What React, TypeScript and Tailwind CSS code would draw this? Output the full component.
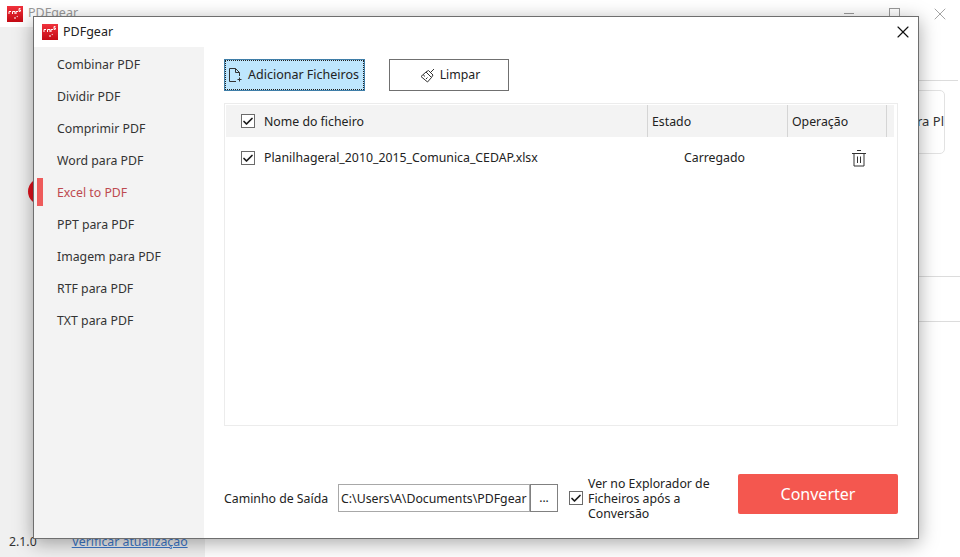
import { Check, X } from 'lucide-react';

const FONT = "font-['Noto_Sans','Liberation_Sans',sans-serif]";

const menuItems = [
  'Combinar PDF',
  'Dividir PDF',
  'Comprimir PDF',
  'Word para PDF',
  'Excel to PDF',
  'PPT para PDF',
  'Imagem para PDF',
  'RTF para PDF',
  'TXT para PDF',
];

function Logo() {
  return (
    <svg width="16" height="16" viewBox="0 0 16 16" className="shrink-0">
      <defs>
        <linearGradient id="logoRed" x1="0" y1="0" x2="0" y2="1">
          <stop offset="0" stopColor="#f0323c" />
          <stop offset="1" stopColor="#c40a14" />
        </linearGradient>
      </defs>
      <rect width="16" height="16" fill="url(#logoRed)" />
      <path d="M2 8V5.5h2M5.5 8V5.5h2.5V8M9 8V5.5h2" stroke="#fff" strokeWidth="1" fill="none" />
      <path d="M13.5 2.5h-1.5v3h1.5M12 4h1.5v1" stroke="#fff" strokeWidth="0.9" fill="none" />
      <path d="M7 12l1-1 1 1-1 1zM9.5 10.5l.7-.7.7.7-.7.7z" fill="#fff" />
    </svg>
  );
}

function CheckBox() {
  return (
    <span className="flex h-[14px] w-[14px] shrink-0 items-center justify-center border border-[#6b6b6b] bg-white">
      <Check size={13} strokeWidth={3.5} className="text-[#1a1a1a]" />
    </span>
  );
}

function BackgroundWindow() {
  return (
    <div className="absolute inset-0 flex flex-col bg-white">
      <div className="flex h-[27px] items-center bg-white pl-[7px]">
        <Logo />
        <span className="ml-[5px] text-[12.5px] text-[#9a9a9a]">PDFgear</span>
        <span className="ml-auto h-px w-[10px] bg-[#9a9a9a]" />
        <span className="ml-[35px] h-[11px] w-[11px] border border-[#9a9a9a]" />
        <X size={20} strokeWidth={1.1} className="ml-[30px] mr-[10px] text-[#9a9a9a]" />
      </div>
      <div className="flex flex-1">
        <div className="flex w-[205px] flex-col justify-end bg-[#f0f0f0] pb-[7px] pl-[9px]">
          <div className="flex items-center text-[12.3px] leading-[16px]">
            <span className="text-[#333]">2.1.0</span>
            <span className="ml-[35px] text-[#3d78c9] underline">Verificar atualização</span>
          </div>
        </div>
        <div className="flex flex-1 flex-col">
          <div className="mt-[53px] mr-[2px] h-px bg-[#dcdcdc]" />
          <div className="ml-auto mr-[15px] mt-[9px] flex h-[64px] w-[60px] items-center justify-end overflow-hidden rounded-[5px] border border-[#e2e2e2] text-[13px] text-[#333]">
            <span className="whitespace-nowrap">para Pl</span>
          </div>
          <div className="mt-[122px] h-px bg-[#dcdcdc]" />
          <div className="mt-[44px] h-px bg-[#dcdcdc]" />
        </div>
      </div>
    </div>
  );
}

function Sidebar() {
  return (
    <div className="flex w-[170px] shrink-0 flex-col bg-[#f3f3f3] pt-[1px]">
      {menuItems.map(item => {
        const active = item === 'Excel to PDF';
        return (
          <div key={item} className="relative flex h-[32px] items-center pl-[23px]">
            {active && <span className="absolute left-[3px] top-[2px] h-[28px] w-[6px] bg-[#ee5b5b]" />}
            <span className={active ? 'pt-[2px] text-[#be4a50]' : 'pt-[2px] text-[#333333]'}>{item}</span>
          </div>
        );
      })}
    </div>
  );
}

function FileTable() {
  return (
    <div className="mt-[12px] h-[323px] border border-[#ececec] pl-px pt-px">
      <div className="mr-[3px] flex h-[32px] items-center bg-[#f3f3f3]">
        <div className="flex w-[421px] items-center pl-[15px]">
          <CheckBox />
          <span className="ml-[9px] pt-[2px]">Nome do ficheiro</span>
        </div>
        <div className="flex h-full w-[140px] items-center border-l border-[#d5d5d5] pl-[4px] pt-[2px]">Estado</div>
        <div className="flex h-full w-[100px] items-center border-x border-[#d5d5d5] pl-[4px] pt-[2px]">Operação</div>
      </div>
      <div className="flex h-[42px] items-center pl-[15px]">
        <CheckBox />
        <span className="ml-[9px] w-[420px]">Planilhageral_2010_2015_Comunica_CEDAP.xlsx</span>
        <span className="w-[168px]">Carregado</span>
        <svg width="16" height="18" viewBox="0 0 16 18" fill="none" stroke="#333" strokeWidth="1" className="-ml-px">
          <path d="M6 1.5h4M1 4.5h14M3 4.5v12.5h10V4.5M6.5 7.5v6.5M9.5 7.5v6.5" />
        </svg>
      </div>
    </div>
  );
}

function Footer() {
  return (
    <div className="mt-[48px] flex items-center">
      <span className="w-[114px] pt-[2px]">Caminho de Saída</span>
      <div className="flex h-[28px] w-[192px] items-center border border-[#a8a8a8] pl-[2px] pt-[2px] whitespace-nowrap">
        C:\Users\A\Documents\PDFgear
      </div>
      <div className="flex h-[28px] w-[28px] items-center justify-center border border-[#808080] text-[12px]">...</div>
      <div className="ml-[11px] flex w-[150px] items-center">
        <CheckBox />
        <span className="ml-[5px] leading-[15px]">Ver no Explorador de Ficheiros após a Conversão</span>
      </div>
      <button className="mb-[8px] ml-[19px] h-[40px] w-[160px] rounded-[2px] bg-[#f4574f] text-[16px] text-white">Converter</button>
    </div>
  );
}

export default function App() {
  return (
    <div className={`relative h-[557px] w-[960px] overflow-hidden ${FONT}`}>
      <BackgroundWindow />
      <span className="absolute left-[28px] top-[178px] h-[27px] w-[14px] rounded-l-full bg-[#e0101c]" />
      <div className="absolute left-[33px] top-[16px] flex h-[523px] w-[886px] flex-col border border-[#6e6e6e] bg-white text-[12.3px] text-[#222] shadow-[0_4px_18px_rgba(0,0,0,0.35)]">
        <div className="flex h-[30px] shrink-0 items-center pl-[8px] pr-[5px]">
          <Logo />
          <span className="ml-[5px] text-[12.5px]">PDFgear</span>
          <X size={20} strokeWidth={1.4} className="ml-auto text-[#111]" />
        </div>
        <div className="flex flex-1">
          <Sidebar />
          <div className="flex flex-1 flex-col pl-[20px] pr-[20px] pt-[12px]">
            <div className="flex gap-[24px]">
              <button className="flex h-[32px] w-[141px] items-center border border-[#3f7ea8] bg-[#bee6fd] pl-[1px] outline-1 -outline-offset-2 outline-dotted outline-[#222]">
                <svg width="16" height="16" viewBox="0 0 16 16" fill="none" stroke="#333" strokeWidth="1" className="ml-[1px] shrink-0">
                  <path d="M9 14.5H2.5v-13h6l4 4v3.5M8.5 1.5v4h4M12.5 10.5v4M10.5 12.5h4" />
                </svg>
                <span className="ml-[5px] whitespace-nowrap text-[12.5px]">Adicionar Ficheiros</span>
              </button>
              <button className="flex h-[32px] w-[120px] items-center justify-center border border-[#707070] bg-white pl-[2px]">
                <svg width="15" height="15" viewBox="0 0 15 15" fill="none" stroke="#333" strokeWidth="1">
                  <path d="M1 8.5L6 4l5.5 5.5L7.5 14zM6 4l2.5-1.5 4.5 4.5-1.5 2.5M10.5 4.5L14 1M3.5 6.5l1 2M6 11l1.5-1.5" />
                </svg>
                <span className="ml-[5px]">Limpar</span>
              </button>
            </div>
            <FileTable />
            <Footer />
          </div>
        </div>
      </div>
    </div>
  );
}
